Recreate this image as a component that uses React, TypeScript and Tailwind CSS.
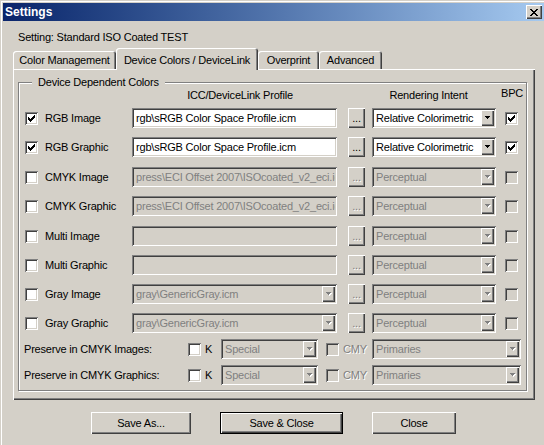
import React from 'react';

const FONT = "font-['Liberation_Sans',Arial,sans-serif]";
const RAISED = 'shadow-[inset_1px_1px_0_#fff,inset_-1px_-1px_0_#404040,inset_-2px_-2px_0_#808080]';
const SUNKEN = 'shadow-[inset_1px_1px_0_#808080,inset_-1px_-1px_0_#fff,inset_2px_2px_0_#404040,inset_-2px_-2px_0_#d4d0c8]';
const EMBOSS = 'text-[#808080] [text-shadow:1px_1px_0_#fff]';

type Row = {
  label: string;
  checked?: boolean;
  kind: 'text' | 'combo';
  value: string;
  enabled?: boolean;
  intent: string;
  bpc?: boolean;
  h: string;
};

const rows: Row[] = [
  { label: 'RGB Image', checked: true, kind: 'text', value: 'rgb\\sRGB Color Space Profile.icm', enabled: true, intent: 'Relative Colorimetric', bpc: true, h: 'h-[29px]' },
  { label: 'RGB Graphic', checked: true, kind: 'text', value: 'rgb\\sRGB Color Space Profile.icm', enabled: true, intent: 'Relative Colorimetric', bpc: true, h: 'h-[30px]' },
  { label: 'CMYK Image', kind: 'text', value: 'press\\ECI Offset 2007\\ISOcoated_v2_eci.icc', intent: 'Perceptual', h: 'h-[29px]' },
  { label: 'CMYK Graphic', kind: 'text', value: 'press\\ECI Offset 2007\\ISOcoated_v2_eci.icc', intent: 'Perceptual', h: 'h-[30px]' },
  { label: 'Multi Image', kind: 'text', value: '', intent: 'Perceptual', h: 'h-[29px]' },
  { label: 'Multi Graphic', kind: 'text', value: '', intent: 'Perceptual', h: 'h-[29px]' },
  { label: 'Gray Image', kind: 'combo', value: 'gray\\GenericGray.icm', intent: 'Perceptual', h: 'h-[29px]' },
  { label: 'Gray Graphic', kind: 'combo', value: 'gray\\GenericGray.icm', intent: 'Perceptual', h: 'h-[26px]' },
];

const CheckBox = ({ checked, disabled }: { checked?: boolean; disabled?: boolean }) => (
  <span className={`flex h-[13px] w-[13px] shrink-0 items-center justify-center ${SUNKEN} ${disabled ? 'bg-[#d4d0c8]' : 'bg-white'}`}>
    {checked && (
      <svg width="7" height="7" viewBox="0 0 7 7" shapeRendering="crispEdges">
        <path d="M6 0h1v1h-1zM5 1h2v1h-2zM0 2h1v1h-1zM4 2h3v1h-3zM0 3h2v1h-2zM3 3h3v1h-3zM0 4h5v1h-5zM1 5h3v1h-3zM2 6h1v1h-1z" fill="#000" />
      </svg>
    )}
  </span>
);

const Arrow = ({ disabled }: { disabled?: boolean }) => (
  <span className={`flex h-full w-[13px] shrink-0 items-center justify-center bg-[#d4d0c8] ${RAISED}`}>
    <svg width="6" height="4" viewBox="0 0 6 4" shapeRendering="crispEdges">
      {disabled && <path d="M1 1h5v1h-5zM2 2h3v1h-3zM3 3h1v1h-1z" fill="#fff" />}
      <path d="M0 0h5v1h-5zM1 1h3v1h-3zM2 2h1v1h-1z" fill={disabled ? '#808080' : '#000'} />
    </svg>
  </span>
);

const Field = ({ value, enabled, combo, w }: { value: string; enabled?: boolean; combo?: boolean; w: string }) => (
  <div className={`flex h-[20px] ${w} shrink-0 overflow-hidden p-[2px] ${SUNKEN} ${enabled ? 'bg-white text-black' : 'bg-[#d4d0c8] text-[#808080]'}`}>
    <span className="min-w-0 flex-1 overflow-hidden whitespace-nowrap pl-[2px] leading-[16px]">{value}</span>
    {combo && <Arrow disabled={!enabled} />}
  </div>
);

const Dots = ({ disabled }: { disabled?: boolean }) => (
  <div className={`flex h-[20px] w-[17px] shrink-0 items-end justify-center bg-[#d4d0c8] pb-[3px] leading-[14px] ${RAISED} ${disabled ? EMBOSS : ''}`}>
    ...
  </div>
);

const Tab = ({ label, selected, w }: { label: string; selected?: boolean; w: string }) =>
  selected ? (
    <div className={`relative z-10 -mb-px flex h-[22px] ${w} justify-center rounded-t-[3px] bg-[#d4d0c8] pt-[5px] leading-[14px] shadow-[inset_1px_1px_0_#fff,inset_-1px_0_0_#404040,inset_-2px_0_0_#808080]`}>
      {label}
    </div>
  ) : (
    <div className={`flex h-[18px] ${w} justify-center rounded-t-[3px] bg-[#d4d0c8] pt-[2px] leading-[14px] shadow-[inset_1px_1px_0_#fff,inset_-1px_0_0_#404040,inset_-2px_0_0_#808080]`}>
      {label}
    </div>
  );

const PreserveRow = ({ label, h }: { label: string; h: string }) => (
  <div className={h}>
    <div className="-ml-px flex h-[20px] items-center">
      <span className="w-[164px] shrink-0">{label}</span>
      <CheckBox />
      <span className="ml-[4px] w-[16px] shrink-0">K</span>
      <Field value="Special" combo w="w-[97px]" />
      <span className="ml-[8px]">
        <CheckBox disabled />
      </span>
      <span className={`ml-[4px] w-[29px] shrink-0 ${EMBOSS}`}>CMY</span>
      <Field value="Primaries" combo w="w-[149px]" />
    </div>
  </div>
);

export default function App() {
  return (
    <div className={`h-[445px] w-[544px] overflow-hidden bg-[#d4d0c8] pl-px pt-px text-[11px] tracking-[-0.2px] text-black ${FONT}`}>
      <div className="h-full border-l border-t border-white pl-px pt-px">
        {/* Title bar */}
        <div className="flex h-[18px] items-center justify-between bg-linear-to-r from-[#0a246a] to-[#a6caf0] pl-[2px] pr-[2px]">
          <span className="text-[12px] font-bold leading-none tracking-normal text-white">Settings</span>
          <span className={`flex h-[14px] w-[16px] items-center justify-center bg-[#d4d0c8] ${RAISED}`}>
            <svg width="8" height="7" viewBox="0 0 8 7" shapeRendering="crispEdges">
              <path d="M0 0h2v1h-2zM6 0h2v1h-2zM1 1h2v1h-2zM5 1h2v1h-2zM2 2h4v1h-4zM3 3h2v1h-2zM2 4h4v1h-4zM1 5h2v1h-2zM5 5h2v1h-2zM0 6h2v1h-2zM6 6h2v1h-2z" fill="#000" />
            </svg>
          </span>
        </div>

        <div className="pl-[10px]">
          <div className="h-[27px] pl-[5px] pt-[9px] leading-[14px]">Setting: Standard ISO Coated TEST</div>

          {/* Tabs */}
          <div className="flex h-[21px] items-end">
            <Tab label="Color Management" w="w-[103px]" />
            <Tab label="Device Colors / DeviceLink" w="w-[142px]" selected />
            <Tab label="Overprint" w="w-[61px]" />
            <Tab label="Advanced" w="w-[63px]" />
          </div>

          {/* Tab panel */}
          <div className={`h-[331px] w-[522px] pl-[5px] pt-[13px] ${RAISED}`}>
            <div className="relative h-[309px] w-[509px] border border-[#808080] pl-[6px] shadow-[inset_1px_1px_0_#fff,1px_1px_0_#fff]">
              <span className="absolute left-[13px] top-[-8px] bg-[#d4d0c8] px-[6px] leading-[14px]">Device Dependent Colors</span>

              <div className="flex h-[25px] items-center">
                <span className="w-[107px] shrink-0" />
                <span className="w-[216px] shrink-0 text-center">ICC/DeviceLink Profile</span>
                <span className="w-[17px] shrink-0" />
                <span className="w-[127px] shrink-0 text-center">Rendering Intent</span>
                <span className="w-[9px] shrink-0" />
                <span className="relative -top-[2px]">BPC</span>
              </div>

              {rows.map((r) => (
                <div key={r.label} className={r.h}>
                  <div className="flex h-[20px] items-center">
                    <CheckBox checked={r.checked} />
                    <span className="ml-[7px] w-[87px] shrink-0 whitespace-nowrap">{r.label}</span>
                    <Field value={r.value} enabled={r.enabled} combo={r.kind === 'combo'} w="w-[205px]" />
                    <span className="ml-[11px]">
                      <Dots disabled={!r.enabled} />
                    </span>
                    <span className="ml-[7px]">
                      <Field value={r.intent} enabled={r.enabled} combo w="w-[124px]" />
                    </span>
                    <span className="ml-[9px]">
                      <CheckBox checked={r.bpc} disabled={!r.enabled} />
                    </span>
                  </div>
                </div>
              ))}

              <PreserveRow label="Preserve in CMYK Images:" h="h-[26px]" />
              <PreserveRow label="Preserve in CMYK Graphics:" h="h-[20px]" />
            </div>
          </div>

          {/* Buttons */}
          <div className="mt-[12px] flex">
            <span className={`ml-[78px] flex h-[22px] w-[100px] items-center justify-center bg-[#d4d0c8] ${RAISED}`}>Save As...</span>
            <span className={`ml-[29px] flex h-[22px] w-[123px] items-center justify-center border border-black bg-[#d4d0c8] ${RAISED}`}>Save &amp; Close</span>
            <span className={`ml-[29px] flex h-[22px] w-[84px] items-center justify-center bg-[#d4d0c8] ${RAISED}`}>Close</span>
          </div>
        </div>
      </div>
    </div>
  );
}
